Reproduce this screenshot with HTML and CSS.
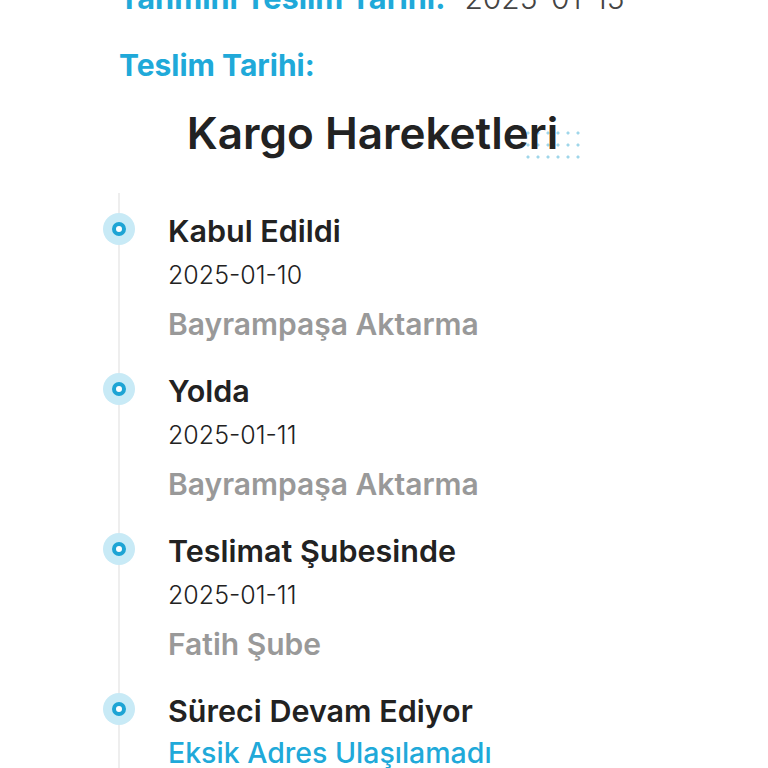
FILE: index.html
```html
<!DOCTYPE html>
<html>

<head>
    <title>Kargo Takip</title>
    <link rel="stylesheet" href="styles.css">
</head>

<body>
    <div class="page">
        <div class="info-row top-row">
            <span class="info-label">Tahmini Teslim Tarihi:</span>
            <span class="info-value">2025-01-15</span>
        </div>
        <div class="info-row">
            <span class="info-label">Teslim Tarihi:</span>
        </div>

        <h2 class="section-title"><span class="title-text">Kargo Hareketleri</span></h2>

        <ul class="timeline">
            <li class="step">
                <span class="step-dot"></span>
                <div class="step-body">
                    <div class="step-name">Kabul Edildi</div>
                    <div class="step-date">2025-01-10</div>
                    <div class="step-place">Bayrampaşa Aktarma</div>
                </div>
            </li>
            <li class="step">
                <span class="step-dot"></span>
                <div class="step-body">
                    <div class="step-name">Yolda</div>
                    <div class="step-date">2025-01-11</div>
                    <div class="step-place">Bayrampaşa Aktarma</div>
                </div>
            </li>
            <li class="step">
                <span class="step-dot"></span>
                <div class="step-body">
                    <div class="step-name">Teslimat Şubesinde</div>
                    <div class="step-date">2025-01-11</div>
                    <div class="step-place">Fatih Şube</div>
                </div>
            </li>
            <li class="step">
                <span class="step-dot"></span>
                <div class="step-body">
                    <div class="step-name">Süreci Devam Ediyor</div>
                    <div class="step-note">Eksik Adres Ulaşılamadı</div>
                </div>
            </li>
        </ul>
    </div>
</body>

</html>
```

FILE: styles.css
```css
body {
    margin: 0;
    background-color: #fff;
    font-family: "Inter", "Noto Sans", sans-serif;
    color: #222;
    overflow: hidden;
}

.page {
    padding: 0 142px 0 119px;
    margin-top: -22px;
}

.info-row {
    display: flex;
    gap: 19px;
    align-items: baseline;
    height: 40px;
    line-height: 40px;
}

.top-row {
    margin-bottom: 27px;
}

.info-label {
    color: #20a9d9;
    font-weight: 700;
    font-size: 30px;
}

.top-row .info-label {
    font-size: 30.7px;
}

.info-value {
    color: #444;
    font-size: 30px;
    font-weight: 300;
}

.section-title {
    margin: 20px 0 0;
    text-align: center;
    font-size: 44px;
    font-weight: 600;
    line-height: 56px;
}

.title-text {
    position: relative;
}

/* decorative dot grid behind the end of the heading */
.title-text::after {
    content: "";
    position: absolute;
    right: -25px;
    top: 21px;
    width: 60px;
    height: 36px;
    background-image: radial-gradient(circle, #9fd6ea 1.3px, transparent 1.8px);
    background-size: 10px 12px;
    z-index: -1;
}

.timeline {
    list-style: none;
    margin: 52px 0 0;
    padding: 0;
    position: relative;
}

.timeline::before {
    content: "";
    position: absolute;
    left: -1px;
    top: -20px;
    bottom: -40px;
    width: 2px;
    background: #eeeeee;
}

.step {
    display: flex;
    gap: 33px;
    height: 160px;
}

.step-dot {
    position: relative;
    flex: none;
    width: 32px;
    height: 32px;
    margin-left: -16px;
    border-radius: 50%;
    background: #c8eaf6;
}

.step-dot::after {
    content: "";
    position: absolute;
    left: 9px;
    top: 9px;
    width: 6px;
    height: 6px;
    border: 4px solid #1ea4d4;
    border-radius: 50%;
    background: #fff;
}

.step-body {
    margin-top: -2px;
}

.step-name {
    font-size: 30.5px;
    font-weight: 600;
    line-height: 40px;
}

.step-date {
    font-size: 25px;
    font-weight: 300;
    line-height: 48px;
    color: #222;
}

.step-place {
    margin-top: 1px;
    font-size: 30px;
    font-weight: 600;
    color: #999;
    line-height: 48px;
}

.step-note {
    font-size: 28.5px;
    font-weight: 500;
    color: #20a9d9;
    line-height: 44px;
}
```
